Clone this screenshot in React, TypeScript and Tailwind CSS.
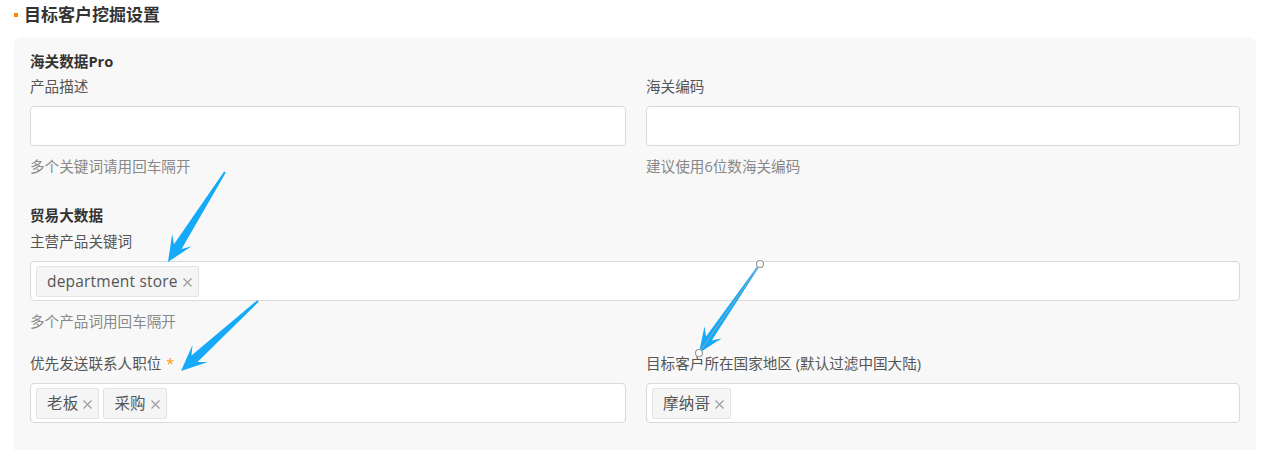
import React from 'react';

const font = { fontFamily: '"Open Sans", "Noto Sans CJK SC", sans-serif' };

type Pt = [number, number];

// tapered annotation arrow, tail -> tip
const arrowPoints = (tail: Pt, tip: Pt, headLen = 26, headW = 11.5, shaftW = 4.5, tailW = 1) => {
    const dx = tip[0] - tail[0];
    const dy = tip[1] - tail[1];
    const len = Math.hypot(dx, dy);
    const ux = dx / len;
    const uy = dy / len;
    const nx = -uy;
    const ny = ux;
    const at = (d: number, w: number): Pt => [tip[0] - ux * d + nx * w, tip[1] - uy * d + ny * w];
    const pts: Pt[] = [
        tip,
        at(headLen, headW),
        at(headLen * 0.7, shaftW),
        at(len, tailW),
        at(len, -tailW),
        at(headLen * 0.7, -shaftW),
        at(headLen, -headW),
    ];
    return pts.map((p) => p.join(',')).join(' ');
};

const Tag = ({ label }: { label: string }) => (
    <span className="flex items-center h-[31px] pt-[2px] pl-[10px] pr-[6px] bg-[#f5f5f5] border border-[#e4e4e4] rounded-[2px] text-[15.5px] tracking-[0.2px] text-[#555] leading-none">
        {label}
        <svg className="ml-[5px]" width="9" height="9" viewBox="0 0 9 9">
            <path d="M0.5 0.5L8.5 8.5M8.5 0.5L0.5 8.5" stroke="#9a9a9a" strokeWidth="1.1" />
        </svg>
    </span>
);

const Field = ({
                   label,
                   required,
                   tags,
                   hint,
               }: {
    label: string;
    required?: boolean;
    tags?: string[];
    hint?: string;
}) => (
    <div className="flex flex-col">
        <div className="h-5 leading-5 text-[14.6px] text-[#555]">
            {label}
            {required && <span className="ml-[5px] text-[#f90]">*</span>}
        </div>
        <div className="mt-[10px] h-10 bg-white border border-[#d9d9d9] rounded-[4px] flex items-center gap-[4px] px-[5px]">
            {tags?.map((t) => <Tag key={t} label={t} />)}
        </div>
        {hint && <div className="mt-[10px] h-5 leading-5 text-[14.6px] text-[#888]">{hint}</div>}
    </div>
);

export default function App() {
    return (
        <div className="relative w-[1264px] h-[450px] bg-white overflow-hidden" style={font}>
            <div className="flex items-center h-[30px] pl-[14px]">
                <span className="w-[4px] h-[4px] bg-[#f80] mr-[6px]" />
                <span className="text-[17px] font-bold text-[#333]">目标客户挖掘设置</span>
            </div>

            <div className="ml-[14px] mt-[7px] w-[1242px] bg-[#f8f8f8] rounded-t-[8px] pt-[14px] px-4 pb-8">
                <div className="h-5 leading-5 text-[14.6px] font-bold text-[#333]">海关数据Pro</div>
                <div className="mt-[5px] grid grid-cols-[596px_1fr] gap-x-5">
                    <Field label="产品描述" hint="多个关键词请用回车隔开" />
                    <Field label="海关编码" hint="建议使用6位数海关编码" />
                </div>

                <div className="mt-[29px] h-5 leading-5 text-[14.6px] font-bold text-[#333]">贸易大数据</div>
                <div className="mt-[6px]">
                    <Field label="主营产品关键词" tags={['department store']} hint="多个产品词用回车隔开" />
                </div>

                <div className="mt-[22px] grid grid-cols-[596px_1fr] gap-x-5">
                    <Field label="优先发送联系人职位" required tags={['老板', '采购']} />
                    <Field label="目标客户所在国家地区 (默认过滤中国大陆)" tags={['摩纳哥']} />
                </div>
            </div>

            <svg className="absolute inset-0 pointer-events-none" width="1264" height="450">
                <polygon points={arrowPoints([225, 172], [168, 262])} fill="#15aaf8" />
                <polygon points={arrowPoints([258, 301], [181, 371])} fill="#15aaf8" />
                <polygon points={arrowPoints([760, 264], [699, 353], 25, 10.5, 3.5, 0.8)} fill="#15aaf8" />
                <line x1="760" y1="264" x2="699" y2="353" stroke="#9aa7b0" strokeWidth="1" />
                <circle cx="760" cy="264" r="3.5" fill="white" stroke="#999" strokeWidth="1.2" />
                <circle cx="699" cy="353" r="3.5" fill="white" stroke="#999" strokeWidth="1.2" />
            </svg>
        </div>
    );
}
